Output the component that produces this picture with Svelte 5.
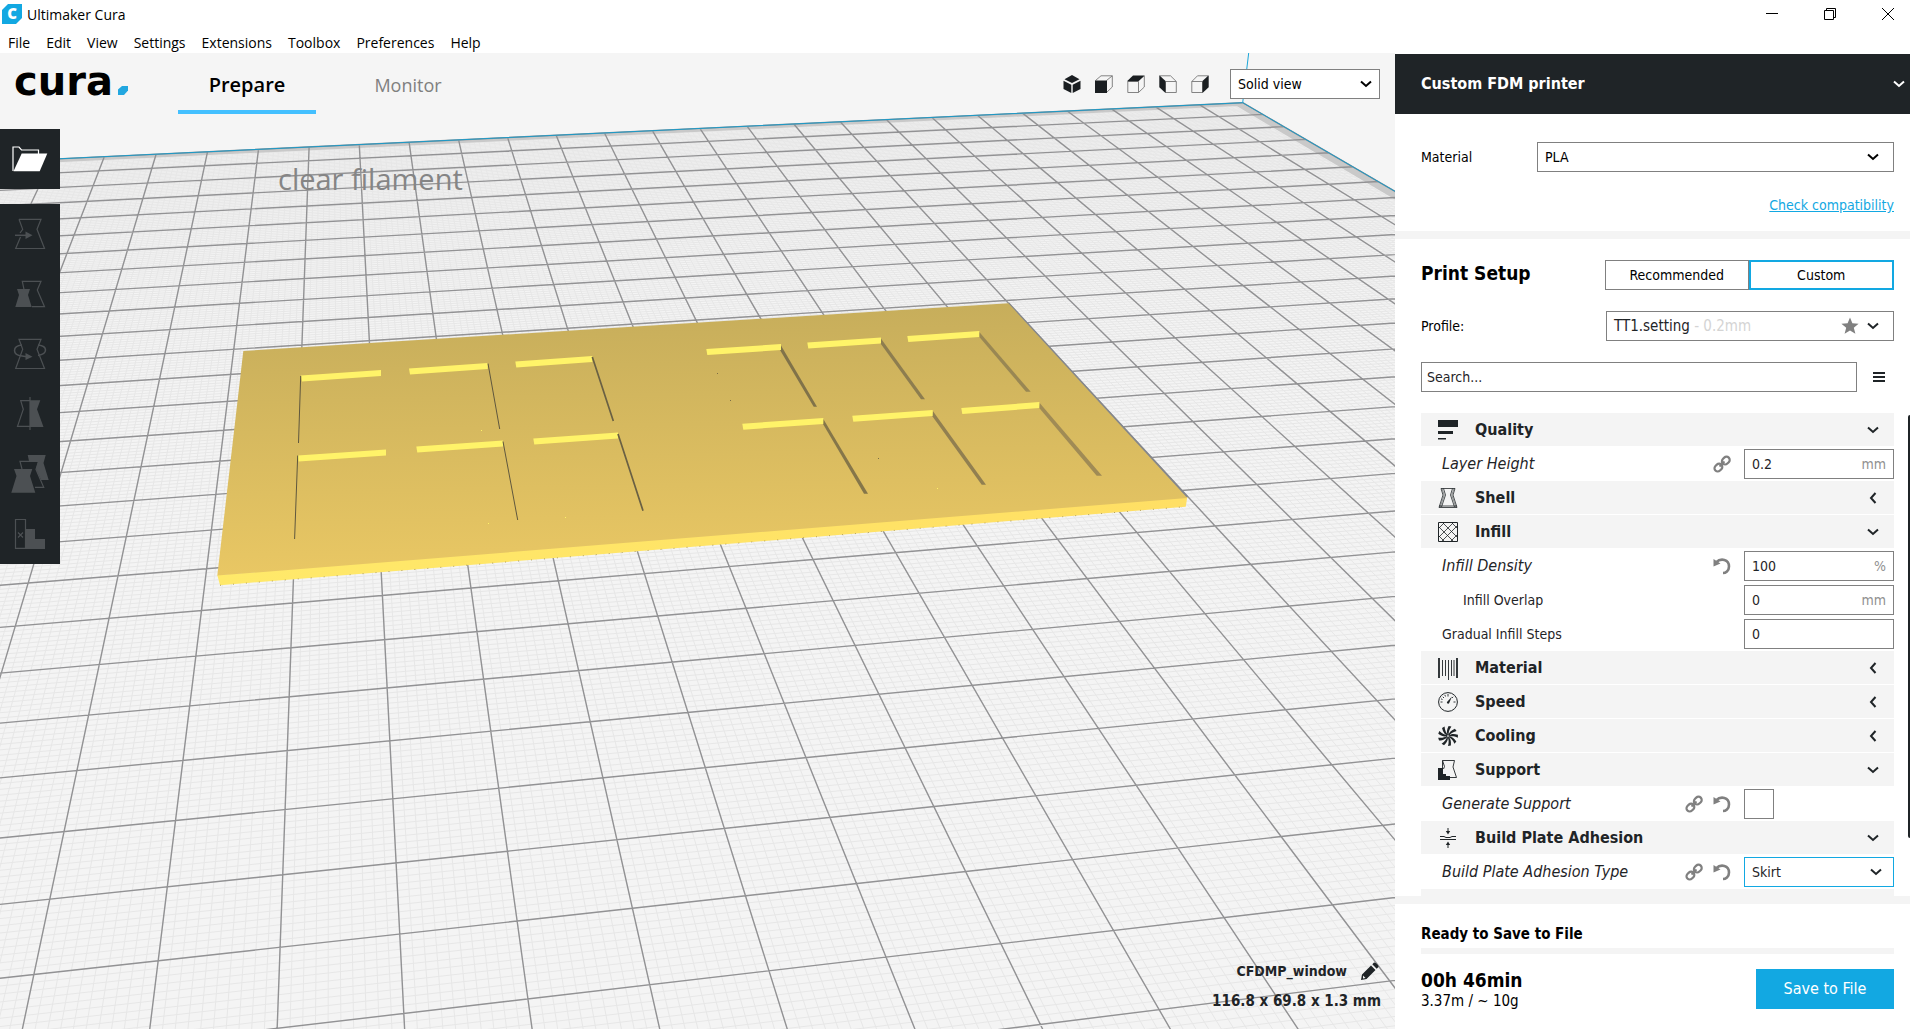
<script lang="ts">
	const menus = ["File", "Edit", "View", "Settings", "Extensions", "Toolbox", "Preferences", "Help"];

	let material = $state("PLA");
	let viewMode = $state("Solid view");
	let adhesion = $state("Skirt");
	let support = $state(false);
	let search = $state("");

	//sidebar list, categories and settings in display order
	const rows = [
		{ kind: "category", name: "Quality", icon: "quality", open: true },
		{ kind: "setting", id: "layer", name: "Layer Height", value: "0.2", unit: "mm", changed: true, linked: true },
		{ kind: "category", name: "Shell", icon: "shell", open: false },
		{ kind: "category", name: "Infill", icon: "infill", open: true },
		{ kind: "setting", id: "density", name: "Infill Density", value: "100", unit: "%", changed: true, reset: true },
		{ kind: "setting", id: "overlap", name: "Infill Overlap", value: "0", unit: "mm", child: true },
		{ kind: "setting", id: "gradual", name: "Gradual Infill Steps", value: "0", unit: "" },
		{ kind: "category", name: "Material", icon: "material", open: false },
		{ kind: "category", name: "Speed", icon: "speed", open: false },
		{ kind: "category", name: "Cooling", icon: "cooling", open: false },
		{ kind: "category", name: "Support", icon: "support", open: true },
		{ kind: "setting", id: "support", name: "Generate Support", type: "check", changed: true, linked: true, reset: true },
		{ kind: "category", name: "Build Plate Adhesion", icon: "adhesion", open: true },
		{ kind: "setting", id: "adhesion", name: "Build Plate Adhesion Type", type: "select", changed: true, linked: true, reset: true },
	];

	const tools = ["Move", "Scale", "Rotate", "Mirror", "Per Model Settings", "Support Blocker"];
	const views = ["3D View", "Front View", "Top View", "Left View", "Right View"];
	const fanBlades = [0, 40, 80, 120, 160, 200, 240, 280, 320];

	//camera projection, u and v count 10 mm cells on the build plate
	function project(u: number, v: number) {
		const w = 1 + 0.010103 * u + 0.058909 * v;
		const x = (277.2 + 130.72 * u + 19.44 * v) / w;
		const y = (1028.3 - 4.569 * u - 25.24 * v) / w;
		return x.toFixed(1) + " " + y.toFixed(1);
	}

	const U0 = -8, U1 = 20, V0 = -4, V1 = 26;

	function gridPath(step: number) {
		let d = "";
		for (let i = 0; i <= (U1 - U0) * step; i++) {
			const u = U0 + i / step;
			d += `M${project(u, V0)}L${project(u, V1)}`;
		}
		for (let i = 0; i <= (V1 - V0) * step; i++) {
			const v = V0 + i / step;
			d += `M${project(U0, v)}L${project(U1, v)}`;
		}
		return d;
	}

	function quad(u0: number, v0: number, u1: number, v1: number) {
		return `M${project(u0, v0)}L${project(u1, v0)}L${project(u1, v1)}L${project(u0, v1)}Z`;
	}

	const plate = quad(U0, V0, U1, V1);
	const minor = gridPath(10);
	const major = gridPath(1);
	const border = quad(U0, V1 - 0.25, U1, V1) + quad(U1 - 0.25, V0, U1, V1 - 0.25);
	const edge = `M${project(U0, V1)}L${project(U1, V1)}L${project(U1, V0)}`;

	//lit walls of the window cut-outs: x1 y1 x2 y2 of the top edge
	const lit = [
		[301, 375.5, 381, 370], [409, 368.5, 487.7, 363], [515.3, 361.5, 592.3, 356],
		[297.7, 455.5, 386, 449.5], [416.3, 446.5, 503, 440.5], [533.3, 438.5, 618, 432.5],
		[706.3, 349, 781, 344], [807.3, 342.5, 881, 337.5], [907.3, 336, 979.3, 331],
		[742.3, 423.7, 823.3, 418], [852.3, 415.7, 932.7, 410], [961.3, 408, 1039.3, 402],
	];

	const shaded = [
		{ points: "780.7,345 817,406.7 813.7,406.7 780,350", fill: "#807249" },
		{ points: "880.7,338.3 925,399.3 921,399.3 880,342.7", fill: "#8d7d4f" },
		{ points: "979.3,332 1030.7,391.7 1026,391.7 978.7,336.3", fill: "#998753" },
		{ points: "823.3,419 868,493.7 864,493.7 823,424", fill: "#857649" },
		{ points: "933,411.3 986,484.7 981.7,484.7 932,415.7", fill: "#917f50" },
		{ points: "1039.7,403 1102,475.7 1096.7,475.7 1039,407.7", fill: "#a08b55" },
	];
</script>

<svelte:head>
	<title>Ultimaker Cura</title>
</svelte:head>

{#snippet chevron(left = false)}
	<svg class="chevron" viewBox="0 0 12 12" width="12" height="12" aria-hidden="true">
		<path d={left ? "M8.5 1 L4 6 L8.5 11" : "M1 3.5 L6 8 L11 3.5"} fill="none" stroke="currentColor" stroke-width="2" />
	</svg>
{/snippet}

{#snippet categoryIcon(name)}
	<svg viewBox="0 0 20 20" width="20" height="20" fill="none" stroke="#1f2427" aria-hidden="true">
		{#if name === "quality"}
			<path d="M0 0h20v7H0z M0 11h15v3H0z M0 18h8v1.5H0z" fill="#1f2427" stroke="none" />
		{:else if name === "shell"}
			<path d="M3 .5H17L15 7 19 19.5H1L5 7Z" stroke-width=".8" />
			<path d="M5.5 .5 7.5 7 3.5 19 M14.5 .5 12.5 7 16.5 19 M1 18H19" stroke-width=".8" />
			<path d="M4 .5 6.2 7 2.2 19 M16 .5 13.8 7 17.8 19" stroke-width=".5" />
		{:else if name === "infill"}
			<path d="M.5 .5H19.5V19.5H.5Z" stroke-width="1" />
			<path d="M0 7 7 0 M0 16 16 0 M3 20 20 3 M12 20 20 12 M0 4 16 20 M4 0 20 16 M13 0 20 7 M0 13 7 20" stroke-width=".8" />
		{:else if name === "material"}
			<path d="M1 0V20 M19 0V20" stroke-width="1.8" />
			<path d="M4.5 2V18 M7.5 2V18 M10.5 2V22 M13.5 2V18 M16 2V18" stroke-width=".9" />
		{:else if name === "speed"}
			<circle cx="10" cy="10" r="9.4" />
			<path d="M2.5 10H4.5 M15.5 10H17.5 M10 2V4.5 M4.8 4.8 6 6 M6.8 2.8 7.5 4.5 M15.2 4.8 14 6 M3 6.8 4.5 7.5" stroke-width=".9" />
			<path d="M14 4.5 11.2 11A1.2 1.2 0 0 1 9 10Z" fill="#1f2427" stroke="none" />
		{:else if name === "cooling"}
			{#each fanBlades as angle}
				<path d="M10 9.2C8.4 6.8 8.6 4.2 10.6 0L13.4 .6C11 4 10.4 6.6 10.8 9.2Z" fill="#1f2427" stroke="none" transform="rotate({angle} 10 10)" />
			{/each}
		{:else if name === "support"}
			<path d="M4.5 9V.5H16.5L15 7 18.5 17.5H12 M4.5 .5 6.5 6.5 5.5 9" stroke-width=".9" />
			<path d="M0 8H5V14H8V16H12V20H0Z" fill="#1f2427" stroke="none" />
		{:else}
			<path d="M2 8.5H6L8 9.5H12L14 8.5H18 M2 11.5H18" stroke-width="1" />
			<path d="M10 0V4 M10 20V16" stroke-width="1" />
			<path d="M10 6.5 7.8 3H12.2Z M10 13.5 7.8 17H12.2Z" fill="#1f2427" stroke="none" />
		{/if}
	</svg>
{/snippet}

{#snippet linkIcon()}
	<svg viewBox="0 0 18 18" width="18" height="18" fill="none" stroke="#808080" stroke-width="2.2" aria-hidden="true">
		<rect x="8.6" y="2.4" width="8.4" height="6.4" rx="3.2" transform="rotate(-45 12.8 5.6)" />
		<rect x="1.2" y="9.4" width="8.4" height="6.4" rx="3.2" transform="rotate(-45 5.4 12.6)" />
		<path d="M6.5 11.5 11.5 6.5" stroke-width="1.8" />
	</svg>
{/snippet}

{#snippet resetIcon()}
	<svg viewBox="0 0 18 18" width="18" height="18" aria-hidden="true">
		<path d="M3 5.5C8 .5 16 2.5 16 9.5C16 14 12.5 16 10 16" fill="none" stroke="#808080" stroke-width="2.6" />
		<path d="M.5 2 V9.5 L7.5 6.5Z" fill="#808080" />
	</svg>
{/snippet}

<div class="window">
	<header class="chrome">
		<div class="titlebar">
			<span class="app-icon" aria-hidden="true">C</span>
			<span class="title">Ultimaker Cura</span>
			<div class="window-buttons">
				<button aria-label="Minimize"><svg viewBox="0 0 14 14" width="14" height="14"><path d="M1 6.5H13" stroke="#000" /></svg></button>
				<button aria-label="Restore"><svg viewBox="0 0 14 14" width="14" height="14"><path d="M1.5 3.5H10.5V12.5H1.5Z M3.5 3.5V1.5H12.5V10.5H10.5" fill="none" stroke="#000" /></svg></button>
				<button aria-label="Close"><svg viewBox="0 0 14 14" width="14" height="14"><path d="M1 1 13 13 M13 1 1 13" stroke="#000" /></svg></button>
			</div>
		</div>
		<nav class="menubar">
			{#each menus as item}
				<button>{item}</button>
			{/each}
		</nav>
	</header>

	<main class="stage">
		<svg class="scene" viewBox="0 53 1395 976" preserveAspectRatio="xMinYMin slice" aria-label="Build plate">
			<defs>
				<linearGradient id="top" x1="0.45" y1="0" x2="0.52" y2="1">
					<stop offset="0" stop-color="#c6ad5b" />
					<stop offset="1" stop-color="#eac864" />
				</linearGradient>
				<linearGradient id="front">
					<stop offset="0" stop-color="#ffe96a" />
					<stop offset="1" stop-color="#ffdf64" />
				</linearGradient>
			</defs>
			<path d={plate} fill="#f4f4f4" />
			<path d={minor} stroke="#e7e7e7" fill="none" />
			<path d={border} fill="#c9c9c9" />
			<path d={major} stroke="#929294" stroke-width="1.4" fill="none" />
			<path d={edge} stroke="#1b9ac8" fill="none" />
			<path d="M1242.7 102.7 1248.7 53" stroke="#1ba5d8" fill="none" />

			<path d="M1008.3 303.3 1187.3 497.3" stroke="#85878c" stroke-width="2.5" />
			<polygon points="217.3,575 1187.3,497 1185.7,506.7 220,585.3" fill="url(#front)" />
			<path d="M220 585.3 1185.7 506.7" stroke="#a18b45" stroke-width=".8" stroke-dasharray="1 12" />
			<polygon points="243.3,351 1008.3,303.3 1187.3,498 217.3,575.6" fill="url(#top)" />
			{#each shaded as s}
				<polygon points={s.points} fill={s.fill} />
			{/each}
			{#each lit as [x1, y1, x2, y2]}
				<polygon points="{x1},{y1} {x2},{y2} {x2},{y2 + 6} {x1 + 1},{y1 + 6}" fill="#fff369" />
			{/each}
			<path d="M300.7 376 298.5 443 M297.7 455.5 294.6 539 M488 363.5 499.7 429 M503 441.5 517.7 520" stroke="#5f573e" fill="none" />
			<path d="M592.3 357 613.3 421 M618 434 643 510.7" stroke="#6a6043" stroke-width="1.7" fill="none" />
			<path d="M717 373h1v1h-1z M730 400h1v1h-1z M878 458h1v1h-1z" fill="#7c6e45" />
			<path d="M481 430h1v1h-1z M565 517h1v1h-1z M488 523h1v1h-1z M937 488h1v1h-1z" fill="#fff369" />
		</svg>

		<div class="topbar">
			<span class="logo">cura<svg viewBox="0 0 10 9" width="10" height="9" aria-hidden="true"><path d="M4 0H10V4.5L6 9H0V3.5Z" fill="#22a7e0" /></svg></span>
			<nav class="tabs">
				<button class="active">Prepare</button>
				<button>Monitor</button>
			</nav>
			<div class="views">
				{#each views as name, i}
					<button aria-label={name}>
						<svg viewBox="0 0 18 18" width="18" height="18" fill="none" stroke="#777" stroke-width=".9">
							{#if i === 0}
								<path d="M9 0 16.5 4.2 9 8 1.5 4.2Z M.5 5.8 8.3 9.7V18L.5 14Z M17.5 5.8 9.7 9.7V18L17.5 14Z" fill="#1a1e21" stroke="none" />
							{:else if i === 1}
								<path d="M.5 5.5 6 .8H17.3V12L11.5 17.5M17.3 .8 11.5 5.5" />
								<path d="M0 5.5H12V18H0Z" fill="#1a1e21" stroke="none" />
							{:else if i === 2}
								<path d="M.8 6.5H11.5V17.5H.8ZM11.5 17.5 17.3 12V1" />
								<path d="M0 6.3 6 .5H17.8L11.5 6.3Z" fill="#1a1e21" stroke="none" />
							{:else if i === 3}
								<path d="M6.5 6.5H17.3V17.5H6.5ZM.8 .8H11.5L17.3 6.5" />
								<path d="M.3 .3 6.5 6V18L.3 12.2Z" fill="#1a1e21" stroke="none" />
							{:else}
								<path d="M.8 6.5H11.5V17.5H.8ZM.8 6.5 6.5 .8H17" />
								<path d="M17.7 .3 11.5 6V18L17.7 12.2Z" fill="#1a1e21" stroke="none" />
							{/if}
						</svg>
					</button>
				{/each}
			</div>
			<div class="select view-select">
				<select aria-label="View mode" bind:value={viewMode}>
					<option>Solid view</option>
					<option>X-Ray view</option>
					<option>Layer view</option>
				</select>
				{@render chevron()}
			</div>
		</div>

		<span class="note">clear filament</span>

		<div class="tools">
			<button class="open" aria-label="Open File">
				<svg viewBox="0 0 60 60" width="60" height="60">
					<path d="M13 42V18H19L21.5 21H38.5V25" fill="none" stroke="#fff" stroke-width="1.2" />
					<path d="M21.7 24.5H47.3L39.7 42.3H13.5Z" fill="#fff" />
				</svg>
			</button>
			<div class="toolset">
				{#each tools as name, i}
					<button aria-label={name} disabled>
						<svg viewBox="0 0 60 60" width="60" height="60" fill="none" stroke="#4c5053" stroke-width="1.2">
							{#if i === 0}
								<path d="M19 15.3H41L37 25.3 44.5 44.5H15.7L20.5 33 M20 29 22.7 25.3 19 15.3" />
								<path d="M15 31.3H27" stroke-width="1.5" />
								<path d="M25.5 27.5 32.5 31.3 25.5 35Z" fill="#4c5053" stroke="none" />
							{:else if i === 1}
								<path d="M24 25.3 22.3 17.3H41L37.3 26 44.5 42.7H32" />
								<path d="M17 25H30L28 31 31.7 43H15.3L19 31Z" fill="#4c5053" stroke="none" />
							{:else if i === 2}
								<path d="M19 15.3H41L37 25.3 44.5 44.5H15.7L22.7 25.3Z" />
								<path d="M22 21C12 22 12 31 22 32L27 32.7 M38 21C48 22 48 30 38 31.5" stroke-width="1.5" />
								<path d="M25.5 29 32.5 32.7 25.5 36Z" fill="#4c5053" stroke="none" />
							{:else if i === 3}
								<path d="M30 16.7H20.7L23.3 25.3 17.5 42.3H30 M30 13V46" />
								<path d="M30 16.3H40.3L37 25.3 43.5 43H30Z" fill="#4c5053" stroke="none" />
							{:else if i === 4}
								<path d="M27.7 11H45.7L43.5 19 48.7 36H41L36 25 38.3 17H29Z" fill="#4c5053" stroke="none" />
								<path d="M22 25 20 17.3H38.5L36 25.5 43.7 43.3H35" />
								<path d="M14 25H32.3L30 32 35.3 48.7H11.3L16.5 32Z" fill="#4c5053" stroke="none" />
							{:else}
								<path d="M15.5 15.5H25.5V44.3H15.5Z M18 28.5 23 33.5 M23 28.5 18 33.5" />
								<path d="M25.5 25H35V35H45V45H25.5Z" fill="#4c5053" stroke="none" />
							{/if}
						</svg>
					</button>
				{/each}
			</div>
		</div>

		<div class="job">
			<div class="job-name">
				<span>CFDMP_window</span>
				<button aria-label="Rename job">
					<svg viewBox="0 0 18 18" width="18" height="18"><path d="M0 18 1 12.5 10 3.5 14.5 8 5.5 17Z M11.3 2.3 13 .5C14 -.3 18.3 3.5 17.5 5L15.7 6.7Z" fill="#1f2427" /><path d="M2 13.5 4.5 16 2 16.5Z" fill="#f4f4f4" /></svg>
				</button>
			</div>
			<strong>116.8 x 69.8 x 1.3 mm</strong>
		</div>
	</main>

	<aside class="sidebar">
		<button class="printer"><span>Custom FDM printer</span>{@render chevron()}</button>

		<section class="material">
			<div class="field-row">
				<label for="material">Material</label>
				<div class="select wide">
					<select id="material" bind:value={material}>
						<option>PLA</option>
						<option>ABS</option>
						<option>PETG</option>
					</select>
					{@render chevron()}
				</div>
			</div>
			<a href="#compatibility">Check compatibility</a>
		</section>

		<section class="setup">
			<div class="field-row">
				<h2>Print Setup</h2>
				<div class="modes">
					<button>Recommended</button>
					<button class="selected">Custom</button>
				</div>
			</div>
			<div class="field-row">
				<span>Profile:</span>
				<button class="profile">
					<span>TT1.setting <i>- 0.2mm</i></span>
					<svg viewBox="0 0 18 18" width="18" height="18" aria-hidden="true"><path d="M9 .5 11.4 6.3 17.6 6.7 12.8 10.7 14.4 16.8 9 13.5 3.6 16.8 5.2 10.7 .4 6.7 6.6 6.3Z" fill="#808080" /></svg>
					{@render chevron()}
				</button>
			</div>
			<div class="field-row search">
				<input type="text" placeholder="Search..." aria-label="Search settings" bind:value={search} />
				<button aria-label="Setting visibility">
					<svg viewBox="0 0 12 12" width="12" height="12"><path d="M0 2H12 M0 6H12 M0 10H12" stroke="#1f2427" stroke-width="2" /></svg>
				</button>
			</div>
		</section>

		<div class="settings">
			{#each rows as row}
				{#if row.kind === "category"}
					<button class="category">
						{@render categoryIcon(row.icon)}
						<span>{row.name}</span>
						{@render chevron(!row.open)}
					</button>
				{:else}
					<div class="setting" class:child={row.child}>
						<label for={row.id} class:changed={row.changed}>{row.name}</label>
						{#if row.linked}{@render linkIcon()}{/if}
						{#if row.reset}{@render resetIcon()}{/if}
						<div class="control">
							{#if row.type === "check"}
								<input id={row.id} type="checkbox" bind:checked={support} />
							{:else if row.type === "select"}
								<div class="select focus">
									<select id={row.id} bind:value={adhesion}>
										<option>Skirt</option>
										<option>Brim</option>
										<option>Raft</option>
									</select>
									{@render chevron()}
								</div>
							{:else}
								<div class="number">
									<input id={row.id} type="text" value={row.value} />
									<span>{row.unit}</span>
								</div>
							{/if}
						</div>
					</div>
				{/if}
			{/each}
			<div class="category"></div>
			<div class="scrollbar"></div>
		</div>

		<footer>
			<p class="status">Ready to Save to File</p>
			<div class="progress"></div>
			<div class="save-row">
				<div>
					<strong>00h 46min</strong>
					<p>3.37m / ~ 10g</p>
				</div>
				<button class="save">Save to File</button>
			</div>
		</footer>
	</aside>
</div>

<style>
	:global(body) {
		margin: 0;
		overflow: hidden;
	}

	.window {
		display: grid;
		grid-template-columns: minmax(0, 1fr) 515px;
		grid-template-rows: auto minmax(0, 1fr);
		height: 100vh;
		background: #fff;
		color: #000;
		font: 14px/20px "DejaVu Sans Condensed", "DejaVu Sans", sans-serif;
	}

	button, input, select {
		box-sizing: border-box;
		margin: 0;
		padding: 0;
		border: 0;
		border-radius: 0;
		background: none;
		color: inherit;
		font: inherit;
		outline: 0;
	}

	svg {
		display: block;
		flex: none;
		overflow: visible;
	}

	p, h2 {
		margin: 0;
	}

	/* title bar and menu */
	.chrome {
		grid-column: 1 / -1;
		font: 14px/20px "Open Sans", sans-serif;
	}

	.titlebar {
		display: flex;
		align-items: center;
		height: 28px;
		padding-left: 2px;
	}

	.app-icon {
		width: 20px;
		height: 20px;
		margin-right: 5px;
		background: #12a8e2;
		clip-path: polygon(30% 0, 100% 0, 100% 70%, 70% 100%, 0 100%, 0 30%);
		color: #fff;
		font: 800 15px/19px "Open Sans", sans-serif;
		text-align: center;
	}

	.title {
		padding-top: 1px;
	}

	.window-buttons {
		display: flex;
		gap: 44px;
		margin-left: auto;
		padding-right: 15px;
	}

	.menubar {
		display: flex;
		gap: 16px;
		height: 25px;
		padding-left: 8px;
	}

	.menubar button {
		height: 30px;
	}

	/* 3D view */
	.stage {
		display: flex;
		flex-direction: column;
		position: relative;
		overflow: hidden;
		background: #f5f5f5;
	}

	.scene {
		position: absolute;
		inset: 0;
		width: 100%;
		height: 100%;
		overflow: hidden;
	}

	.topbar {
		display: flex;
		align-items: center;
		position: relative;
		height: 61px;
		padding: 0 15px 0 14px;
	}

	.logo {
		display: flex;
		align-items: baseline;
		gap: 5px;
		width: 164px;
		font: bold 40px/44px "DejaVu Sans", sans-serif;
		padding-bottom: 6px;
		box-sizing: border-box;
	}

	.tabs {
		display: flex;
		gap: 23px;
		height: 100%;
		font: 18px/60px "Open Sans", sans-serif;
	}

	.tabs button {
		width: 138px;
		padding-top: 2px;
		border-bottom: 4px solid transparent;
		color: #808080;
	}

	.tabs .active {
		border-color: #44c0ff;
		color: #000;
		font-size: 20px;
		font-weight: 600;
	}

	.views {
		display: flex;
		gap: 14px;
		margin: 0 21px 0 auto;
	}

	.select {
		display: grid;
		grid-template-columns: 1fr auto;
		align-items: center;
		box-sizing: border-box;
		height: 30px;
		border: 1px solid #808080;
		background: #fff;
	}

	.select select {
		grid-area: 1 / 1 / 2 / 3;
		width: 100%;
		height: 28px;
		padding-left: 7px;
		appearance: none;
	}

	.select :global(.chevron) {
		grid-area: 1 / 2;
		margin-right: 14px;
		pointer-events: none;
	}

	.view-select {
		width: 150px;
	}

	.view-select :global(.chevron) {
		margin-right: 7px;
	}

	.note {
		position: absolute;
		left: 278px;
		top: 106px;
		color: #858585;
		font: 29px/40px "Open Sans", sans-serif;
	}

	.tools {
		display: flex;
		flex-direction: column;
		gap: 15px;
		position: relative;
		width: 60px;
		margin-top: 15px;
	}

	.tools button {
		display: block;
		background: #1f2427;
	}

	.job {
		display: flex;
		flex-direction: column;
		align-items: flex-end;
		gap: 10px;
		position: relative;
		margin-top: auto;
		padding: 0 14px 18px 0;
		color: #1f2427;
		font-size: 15px;
	}

	.job-name {
		display: flex;
		align-items: center;
		gap: 14px;
		padding-right: 2px;
		font-size: 14px;
		font-weight: bold;
	}

	/* sidebar */
	.sidebar {
		display: flex;
		flex-direction: column;
		min-height: 0;
		padding-top: 1px;
	}

	.printer {
		display: flex;
		align-items: center;
		justify-content: space-between;
		flex: none;
		height: 60px;
		padding: 0 5px 0 26px;
		background: #1f2427;
		color: #fff;
		font-size: 16px;
		font-weight: bold;
	}

	.field-row {
		display: flex;
		align-items: center;
		justify-content: space-between;
		height: 30px;
	}

	.wide {
		width: 357px;
	}

	.material {
		display: flex;
		flex-direction: column;
		gap: 23px;
		padding: 28px 16px 16px 26px;
		border-bottom: 8px solid #f4f4f4;
	}

	.material a {
		align-self: flex-end;
		color: #12a8e2;
	}

	.setup {
		display: flex;
		flex-direction: column;
		gap: 21px;
		padding: 21px 16px 21px 26px;
	}

	h2 {
		font-size: 19px;
		line-height: 24px;
		padding-bottom: 4px;
	}

	.modes {
		display: flex;
		width: 289px;
	}

	.modes button {
		flex: 1;
		height: 30px;
		border: 1px solid #808080;
	}

	.modes .selected {
		border: 2px solid #12a8e2;
	}

	.profile {
		display: flex;
		align-items: center;
		gap: 8px;
		width: 288px;
		height: 30px;
		padding: 0 14px 0 7px;
		border: 1px solid #808080;
		color: #1f2427;
		font-size: 15px;
	}

	.profile span {
		flex: 1;
		text-align: left;
	}

	.profile i {
		color: #d4d4d4;
		font-style: normal;
	}

	.search input {
		width: 436px;
		height: 30px;
		padding-left: 5px;
		border: 1px solid #808080;
	}

	.search input::placeholder {
		color: #1f2427;
		opacity: 1;
	}

	.search button {
		padding-right: 9px;
	}

	.settings {
		flex: 1;
		position: relative;
		min-height: 0;
		overflow: hidden;
		padding: 0 16px 0 26px;
		color: #1f2427;
	}

	.category {
		display: flex;
		align-items: center;
		gap: 17px;
		width: 100%;
		height: 34px;
		padding: 0 15px 0 17px;
		border-bottom: 1px solid #fff;
		background: #f4f4f4;
		font-size: 16px;
		font-weight: bold;
		text-align: left;
		box-sizing: border-box;
	}

	.category span {
		flex: 1;
	}

	.setting {
		display: flex;
		align-items: center;
		gap: 10px;
		height: 34px;
		padding-left: 21px;
	}

	.setting.child {
		padding-left: 42px;
	}

	.setting label {
		flex: 1;
	}

	.setting .changed {
		font-size: 16px;
		font-style: italic;
	}

	.control {
		width: 150px;
		margin-left: 3px;
	}

	.focus {
		border-color: #12a8e2;
	}

	.focus :global(.chevron) {
		margin-right: 11px;
	}

	.number {
		display: flex;
		align-items: center;
		box-sizing: border-box;
		height: 30px;
		padding: 0 7px;
		border: 1px solid #808080;
	}

	.number input {
		flex: 1;
		min-width: 0;
	}

	.number span {
		color: #909090;
	}

	input[type="checkbox"] {
		display: block;
		width: 30px;
		height: 30px;
		border: 1px solid #808080;
		appearance: none;
	}

	.scrollbar {
		position: absolute;
		top: 2px;
		right: 0;
		width: 2px;
		height: 423px;
		border-radius: 2px 0 0 2px;
		background: #1f2427;
	}

	footer {
		padding: 20px 16px 20px 26px;
		border-top: 8px solid #f4f4f4;
	}

	.status {
		font-size: 15px;
		font-weight: bold;
	}

	.progress {
		height: 6px;
		margin: 4px 0 15px;
		background: #f4f4f4;
	}

	.save-row {
		display: flex;
		justify-content: space-between;
		height: 40px;
	}

	.save-row strong {
		display: block;
		font-size: 19px;
		line-height: 22px;
	}

	.save-row p {
		font-size: 15px;
	}

	.save {
		width: 138px;
		height: 40px;
		background: #12a8e2;
		color: #fff;
		font-size: 16px;
	}
</style>
